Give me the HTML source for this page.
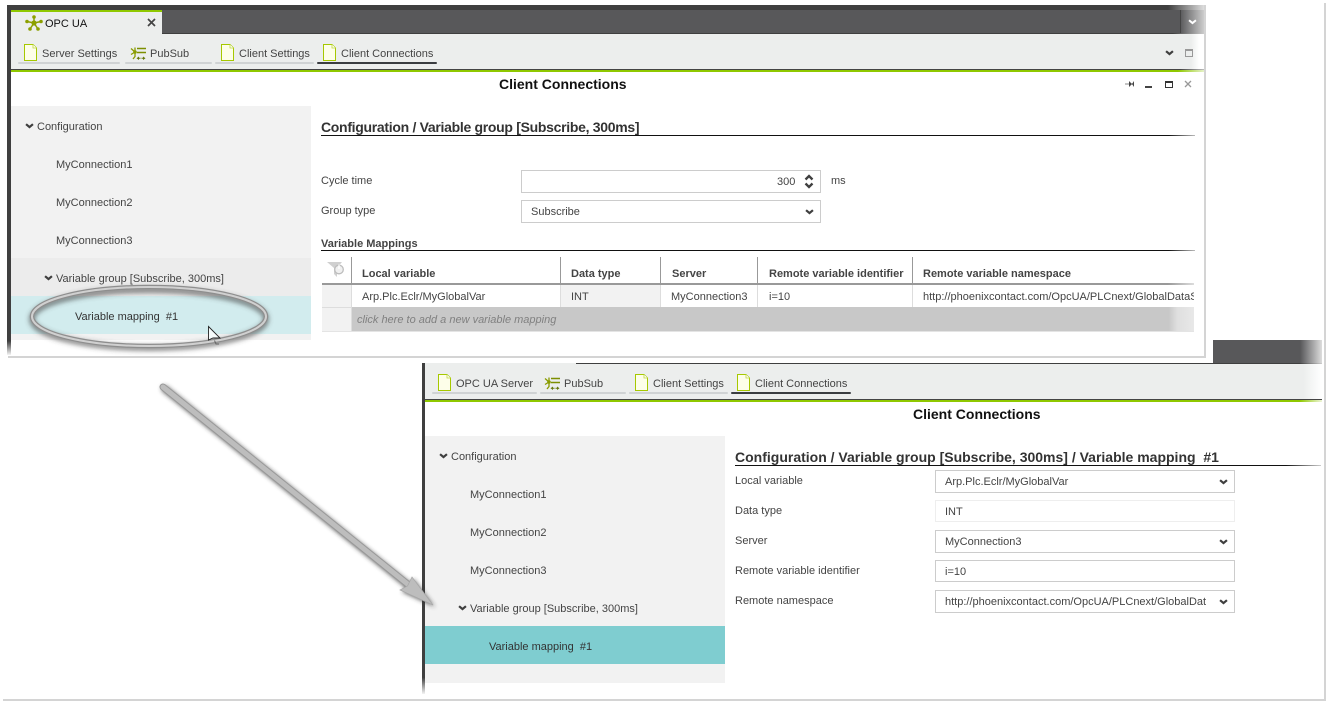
<!DOCTYPE html>
<html><head><meta charset="utf-8"><title>Client Connections</title>
<style>
html,body{margin:0;padding:0;background:#fff}
#p{position:relative;width:1328px;height:703px;overflow:hidden;background:#fff;font:11px/16px "Liberation Sans",Arial,sans-serif;color:#444}
#p div,#p span,#p svg{position:absolute}
#p span{white-space:nowrap;margin-top:1px}
#p .h,#p .t{margin-top:0}
.b{font-weight:bold}
.h{font-size:14px;font-weight:bold;color:#333}
.t{font-size:14px;font-weight:bold;color:#111}
.f{box-sizing:border-box;background:#fff;border:1px solid #ccc}
.ug{height:2px;background:#d0d3d4;border-radius:1px}
.ud{height:2px;background:#3a3d40;border-radius:1px}
</style></head><body><div id="p">
<svg width="0" height="0" style="left:0;top:0"><defs>
<symbol id="doc" viewBox="0 0 13 17"><path d="M.5.5H9L12.5 4V16.500H.5Z" fill="#fdfee9" stroke="#a6c800"/><path d="M9 .5V4H12.500" fill="#fff" stroke="#c0d840" stroke-width=".8"/></symbol>
<symbol id="pub" viewBox="0 0 17 13"><g fill="none" stroke="#8a9c00" stroke-width="1.300"><path d="M5 5L1 1.500M5 5L1 7.500M5 5V.5M5 5V9.500L3 12"/></g><path d="M7 1.500H16M7 5.500H16" stroke="#7d8f00" stroke-width="1.600"/><circle cx="5" cy="5" r="1.800" fill="#8a9c00"/><path d="M9 9.500L6.500 11.300 9 13ZM13 9.500L15.500 11.300 13 13Z" fill="#66780a"/><path d="M8 11.300H10.500M11.500 11.300H14" stroke="#66780a"/></symbol>
<symbol id="chev" viewBox="0 0 11 7"><path d="M1.300 1.300L5.500 4.800 9.700 1.300" fill="none" stroke="#3f3f3f" stroke-width="2.700"/></symbol>
<filter id="sh" x="-20%" y="-30%" width="140%" height="160%"><feGaussianBlur stdDeviation="2.500"/></filter>
<filter id="sh2" filterUnits="userSpaceOnUse" x="140" y="370" width="320" height="260"><feGaussianBlur stdDeviation="2"/></filter>
</defs></svg>

<!-- outer frame -->
<div style="left:3px;top:699px;width:1322px;height:2px;background:#d4d4d4"></div>
<div style="left:1324px;top:3px;width:2px;height:698px;background:#d4d4d4"></div>

<!-- lower window -->
<div style="left:1213px;top:340px;width:109px;height:23px;background:linear-gradient(90deg,#58585a 0,#58585a 80%,#ddd 100%)"></div>
<div style="left:422px;top:363px;width:3px;height:331px;background:linear-gradient(180deg,#3f3f3f 0,#3f3f3f 95%,#f4f4f4 100%)"></div>
<div style="left:576px;top:363px;width:746px;height:1px;background:linear-gradient(90deg,#3f3f3f 0,#3f3f3f 97%,#ccc 100%)"></div>
<div style="left:425px;top:363px;width:151px;height:1px;background:#eceeed"></div>
<div style="left:425px;top:364px;width:897px;height:35px;background:linear-gradient(90deg,#eceeed 0,#eceeed 97.900%,#fff 100%)"></div>
<div style="left:425px;top:399px;width:897px;height:1px;background:#444"></div>
<div style="left:425px;top:400px;width:897px;height:2px;background:linear-gradient(90deg,#8fc800 0,#8fc800 97.500%,#eef5d8 100%)"></div>

<svg style="left:438px;top:374px" width="13" height="17"><use href="#doc"/></svg>
<span style="left:456px;top:375px">OPC UA Server</span><div class="ug" style="left:432px;top:392px;width:105px"></div>
<svg style="left:544px;top:377px" width="17" height="13"><use href="#pub"/></svg>
<span style="left:564px;top:375px">PubSub</span><div class="ug" style="left:540px;top:392px;width:86px"></div>
<svg style="left:635px;top:374px" width="13" height="17"><use href="#doc"/></svg>
<span style="left:653px;top:375px">Client Settings</span><div class="ug" style="left:629px;top:392px;width:99px"></div>
<svg style="left:737px;top:374px" width="13" height="17"><use href="#doc"/></svg>
<span style="left:755px;top:375px">Client Connections</span><div class="ud" style="left:731px;top:392px;width:120px"></div>

<span class="t" style="left:913px;top:406px">Client Connections</span>

<div style="left:425px;top:436px;width:300px;height:247px;background:#f2f2f2"></div>
<div style="left:425px;top:626px;width:300px;height:38px;background:#7fcdd0"></div>
<svg style="left:439px;top:453px" width="9" height="6"><use href="#chev"/></svg>
<span style="left:451px;top:448px">Configuration</span>
<span style="left:470px;top:486px">MyConnection1</span>
<span style="left:470px;top:524px">MyConnection2</span>
<span style="left:470px;top:562px">MyConnection3</span>
<svg style="left:458px;top:605px" width="9" height="6"><use href="#chev"/></svg>
<span style="left:470px;top:600px">Variable group [Subscribe, 300ms]</span>
<span style="left:489px;top:638px;color:#333">Variable mapping &nbsp;#1</span>

<span class="h" style="left:735px;top:449px">Configuration / Variable group [Subscribe, 300ms] / Variable mapping &nbsp;#1</span>
<div style="left:735px;top:465px;width:586px;height:1px;background:linear-gradient(90deg,#111 0,#111 94%,#ccc 100%)"></div>

<span style="left:735px;top:472px">Local variable</span>
<span style="left:735px;top:502px">Data type</span>
<span style="left:735px;top:532px">Server</span>
<span style="left:735px;top:562px">Remote variable identifier</span>
<span style="left:735px;top:592px">Remote namespace</span>

<div class="f" style="left:935px;top:470px;width:300px;height:23px"></div>
<span style="left:945px;top:473px">Arp.Plc.Eclr/MyGlobalVar</span>
<svg style="left:1219px;top:479px" width="9" height="6"><use href="#chev"/></svg>
<div class="f" style="left:935px;top:500px;width:300px;height:22px;border-color:#eee"></div>
<span style="left:945px;top:503px">INT</span>
<div class="f" style="left:935px;top:530px;width:300px;height:23px"></div>
<span style="left:945px;top:533px">MyConnection3</span>
<svg style="left:1219px;top:539px" width="9" height="6"><use href="#chev"/></svg>
<div class="f" style="left:935px;top:560px;width:300px;height:22px"></div>
<span style="left:945px;top:563px">i=10</span>
<div class="f" style="left:935px;top:590px;width:300px;height:23px"></div>
<span style="left:945px;top:593px;width:261px;overflow:hidden">http://phoenixcontact.com/OpcUA/PLCnext/GlobalDataSpace</span>
<svg style="left:1219px;top:599px" width="9" height="6"><use href="#chev"/></svg>

<!-- upper window -->
<div style="left:7px;top:5px;width:1198px;height:352px;background:#fff"></div>
<div style="left:1204px;top:5px;width:2px;height:352px;background:#d4d4d4"></div>
<div style="left:8px;top:356px;width:1198px;height:2px;background:#d4d4d4"></div>
<div style="left:7px;top:5px;width:4px;height:350px;background:linear-gradient(180deg,#3f3f3f 0,#3f3f3f 96%,#f4f4f4 100%)"></div>
<div style="left:7px;top:5px;width:1197px;height:5px;background:linear-gradient(90deg,#3f3f3f 0,#3f3f3f 97%,#ddd 100%)"></div>
<div style="left:162px;top:10px;width:1042px;height:23px;background:linear-gradient(90deg,#58585a 0,#58585a 97.700%,#ccc 100%)"></div>
<div style="left:1180px;top:10px;width:1px;height:23px;background:#444"></div>
<svg style="left:1188px;top:19px" width="9" height="6" viewBox="0 0 11 7"><path d="M1.300 1.300L5.500 4.800 9.700 1.300" fill="none" stroke="#fff" stroke-width="2.400"/></svg>
<div style="left:162px;top:33px;width:1042px;height:1px;background:linear-gradient(90deg,#3f3f3f 0,#3f3f3f 97%,#ccc 100%)"></div>
<div style="left:11px;top:10px;width:151px;height:2px;background:#8fc800"></div>
<div style="left:11px;top:12px;width:151px;height:22px;background:#eceeed"></div>
<div style="left:11px;top:34px;width:1193px;height:35px;background:linear-gradient(90deg,#eceeed 0,#eceeed 98.900%,#fff 99.600%)"></div>
<div style="left:11px;top:69px;width:1193px;height:1px;background:linear-gradient(90deg,#444 0,#444 98%,#bbb 100%)"></div>
<div style="left:11px;top:70px;width:1193px;height:2px;background:linear-gradient(90deg,#8fc800 0,#8fc800 97.800%,#e6f2c8 100%)"></div>

<svg style="left:25px;top:15px" width="18" height="17" viewBox="0 0 18 17"><g stroke="#8ca000" stroke-width="1.500"><path d="M9 8L9 2M9 8L2 6.500M9 8L16 6.500M9 8L5 14M9 8L13 14"/></g><g fill="#8ca000"><circle cx="9" cy="8" r="2.600"/><circle cx="9" cy="2" r="1.800"/><circle cx="2" cy="6.500" r="1.800"/><circle cx="16" cy="6.500" r="1.800"/><circle cx="5" cy="14" r="1.800"/><circle cx="13" cy="14" r="1.800"/></g></svg>
<span style="left:45px;top:15px;color:#111">OPC UA</span>
<svg style="left:147px;top:18px" width="9" height="9"><path d="M1 1L8 8M8 1L1 8" stroke="#444" stroke-width="1.700"/></svg>

<svg style="left:24px;top:44px" width="13" height="17"><use href="#doc"/></svg>
<span style="left:42px;top:45px">Server Settings</span><div class="ug" style="left:18px;top:62px;width:102px"></div>
<svg style="left:130px;top:47px" width="17" height="13"><use href="#pub"/></svg>
<span style="left:150px;top:45px">PubSub</span><div class="ug" style="left:125px;top:62px;width:87px"></div>
<svg style="left:221px;top:44px" width="13" height="17"><use href="#doc"/></svg>
<span style="left:239px;top:45px">Client Settings</span><div class="ug" style="left:215px;top:62px;width:99px"></div>
<svg style="left:323px;top:44px" width="13" height="17"><use href="#doc"/></svg>
<span style="left:341px;top:45px">Client Connections</span><div class="ud" style="left:317px;top:62px;width:120px"></div>
<svg style="left:1165px;top:50px" width="9" height="6"><use href="#chev"/></svg>
<div style="left:1185px;top:49px;width:6px;height:5px;border:1px solid #999;border-top-width:2px"></div>

<span class="t" style="left:499px;top:76px">Client Connections</span>
<svg style="left:1125px;top:80px" width="10" height="8"><path d="M0 4H9" stroke="#888"/><path d="M4 1L4 7L7 4ZM9 1V7L7 4Z" fill="#444"/></svg>
<div style="left:1145px;top:86px;width:7px;height:2px;background:#444"></div>
<div style="left:1165px;top:81px;width:6px;height:4px;border:1px solid #333;border-top-width:2px"></div>
<svg style="left:1184px;top:80px" width="8" height="8"><path d="M1 1L7 7M7 1L1 7" stroke="#999" stroke-width="1.300"/></svg>

<div style="left:11px;top:106px;width:300px;height:234px;background:#f2f2f2"></div>
<div style="left:11px;top:258px;width:300px;height:38px;background:#ececec"></div>
<div style="left:11px;top:296px;width:300px;height:38px;background:#d2ecee"></div>
<svg style="left:25px;top:123px" width="9" height="6"><use href="#chev"/></svg>
<span style="left:37px;top:118px">Configuration</span>
<span style="left:56px;top:156px">MyConnection1</span>
<span style="left:56px;top:194px">MyConnection2</span>
<span style="left:56px;top:232px">MyConnection3</span>
<svg style="left:44px;top:275px" width="9" height="6"><use href="#chev"/></svg>
<span style="left:56px;top:270px">Variable group [Subscribe, 300ms]</span>
<span style="left:75px;top:308px;color:#333">Variable mapping &nbsp;#1</span>

<span class="h" style="left:321px;top:119px;letter-spacing:-.3px">Configuration / Variable group [Subscribe, 300ms]</span>
<div style="left:321px;top:135px;width:874px;height:1px;background:linear-gradient(90deg,#111 0,#111 97%,#bbb 100%)"></div>

<span style="left:321px;top:172px">Cycle time</span>
<span style="left:321px;top:202px">Group type</span>
<div class="f" style="left:521px;top:170px;width:300px;height:23px"></div>
<span style="left:777px;top:173px">300</span>
<svg style="left:804px;top:173px" width="10" height="17"><path d="M1.500 6.500L5 3 8.500 6.500M1.500 10.500L5 14 8.500 10.500" fill="none" stroke="#3f3f3f" stroke-width="2.300"/></svg>
<span style="left:831px;top:172px">ms</span>
<div class="f" style="left:521px;top:200px;width:300px;height:23px"></div>
<span style="left:531px;top:203px">Subscribe</span>
<svg style="left:805px;top:209px" width="9" height="6"><use href="#chev"/></svg>

<span class="b" style="left:321px;top:235px">Variable Mappings</span>
<div style="left:321px;top:250px;width:874px;height:1px;background:linear-gradient(90deg,#111 0,#111 97%,#bbb 100%)"></div>

<!-- table -->
<div style="left:322px;top:285px;width:29px;height:46px;background:#f2f2f2"></div>
<div style="left:561px;top:285px;width:99px;height:22px;background:#f2f2f2"></div>
<div style="left:352px;top:307px;width:842px;height:24px;background:linear-gradient(90deg,#c8c8c8 0,#c8c8c8 97%,#dfdfdf 98%,#e8e8e8 100%)"></div>
<div style="left:322px;top:283px;width:872px;height:2px;background:linear-gradient(90deg,#999 0,#999 97%,#ddd 100%)"></div>
<div style="left:322px;top:331px;width:872px;height:1px;background:#e4e4e4"></div>
<div style="left:322px;top:307px;width:29px;height:1px;background:#ddd"></div>
<div style="left:351px;top:257px;width:1px;height:26px;background:#999"></div>
<div style="left:560px;top:257px;width:1px;height:26px;background:#999"></div>
<div style="left:660px;top:257px;width:1px;height:26px;background:#999"></div>
<div style="left:757px;top:257px;width:1px;height:26px;background:#999"></div>
<div style="left:912px;top:257px;width:1px;height:26px;background:#999"></div>
<div style="left:351px;top:285px;width:1px;height:46px;background:#ddd"></div>
<div style="left:560px;top:285px;width:1px;height:22px;background:#ddd"></div>
<div style="left:660px;top:285px;width:1px;height:22px;background:#ddd"></div>
<div style="left:757px;top:285px;width:1px;height:22px;background:#ddd"></div>
<div style="left:912px;top:285px;width:1px;height:22px;background:#ddd"></div>
<svg style="left:327px;top:262px" width="18" height="16"><path d="M0 0H15L10 6V15L7 12V6Z" fill="#d0d0d0"/><circle cx="12" cy="7.500" r="4.300" fill="#f0f0f0" stroke="#bdbdbd" stroke-width="1.300"/><path d="M12 2.500V7" stroke="#fff" stroke-width="1.300"/></svg>
<span class="b" style="left:362px;top:265px">Local variable</span>
<span class="b" style="left:571px;top:265px">Data type</span>
<span class="b" style="left:672px;top:265px">Server</span>
<span class="b" style="left:769px;top:265px">Remote variable identifier</span>
<span class="b" style="left:923px;top:265px">Remote variable namespace</span>
<span style="left:362px;top:288px">Arp.Plc.Eclr/MyGlobalVar</span>
<span style="left:571px;top:288px">INT</span>
<span style="left:671px;top:288px">MyConnection3</span>
<span style="left:769px;top:288px">i=10</span>
<span style="left:923px;top:288px;width:271px;overflow:hidden">http://phoenixcontact.com/OpcUA/PLCnext/GlobalDataSpace</span>
<span style="left:357px;top:311px;font-style:italic;color:#808080">click here to add a new variable mapping</span>

<!-- callouts -->
<svg style="left:0;top:0" width="1328" height="703" viewBox="0 0 1328 703">
<ellipse cx="149" cy="319" rx="117" ry="29" fill="none" stroke="#444" stroke-opacity=".6" stroke-width="6" filter="url(#sh)"/>
<ellipse cx="149" cy="316.500" rx="117" ry="29.500" fill="none" stroke="#8e8e8e" stroke-width="4.500"/>
<ellipse cx="149" cy="316.500" rx="117" ry="29.500" fill="none" stroke="#d0d0d0" stroke-width="2"/>
<path d="M208.500 326.500V340L213 338H220Z" fill="#f6fbfb" stroke="#222" stroke-width=".9"/>
<path d="M214.500 340.500L216 344H219" fill="none" stroke="#666" stroke-width="1"/>
<g filter="url(#sh2)" transform="translate(2 2)"><path d="M163 387L412 588" stroke="#333" stroke-opacity=".75" stroke-width="7" stroke-linecap="round" fill="none"/><path d="M412 577L433 605 400 590Z" fill="#333" fill-opacity=".7"/></g>
<path d="M163 387L410 586" stroke="#999" stroke-width="7" stroke-linecap="round" fill="none"/>
<path d="M163 387L410 586" stroke="#bdbdbd" stroke-width="5" stroke-linecap="round" fill="none"/>
<path d="M412 577L433 605 400 590 407.500 586Z" fill="#bdbdbd" stroke="#a8a8a8" stroke-width=".7"/>
</svg>
</div></body></html>
